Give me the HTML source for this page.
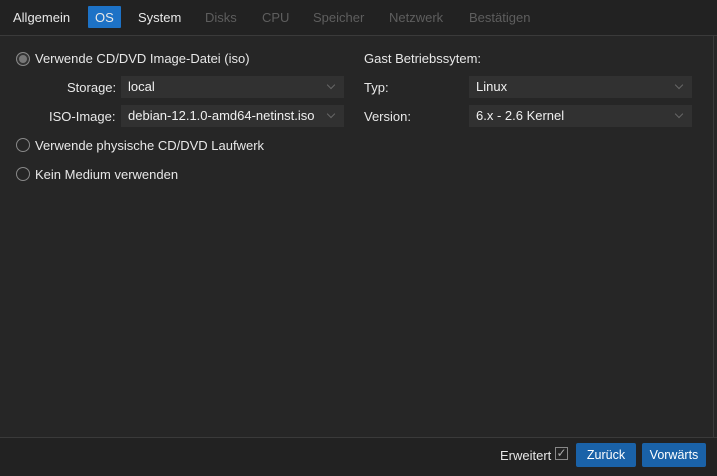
<!DOCTYPE html>
<html><head><meta charset="utf-8"><style>
body{margin:0;width:717px;height:475px;background:#262626;font-family:"Liberation Sans",sans-serif;font-size:13px;color:#e8e8e8;position:relative;overflow:hidden}
.a{position:absolute;white-space:nowrap}
.tabs{position:absolute;left:0;top:0;width:717px;height:35px;background:#222;border-bottom:1px solid #3a3a3a}
.t{position:absolute;top:10px;font-size:13px}
.dis{color:#5e5e5e}
.sel{position:absolute;height:22px;background:#313131;line-height:22px;padding-left:7px;box-sizing:border-box;color:#f0f0f0}
.sel:after{content:"";position:absolute;right:10px;top:6px;width:5px;height:5px;border-right:1px solid #666;border-bottom:1px solid #666;transform:rotate(45deg)}
.r{position:absolute;width:14px;height:14px;border:1px solid #888;border-radius:50%;box-sizing:border-box}
.btn{position:absolute;top:443px;height:24px;background:#1a62a8;color:#fff;line-height:24px;text-align:center;border-radius:2px;font-size:12.5px}
</style></head><body>
<div class="tabs"></div>
<div class="t" style="left:13px">Allgemein</div>
<div class="a" style="left:88px;top:6px;width:33px;height:22px;background:#1d72c6;border-radius:1px"></div>
<div class="t" style="left:95px">OS</div>
<div class="t" style="left:138px">System</div>
<div class="t dis" style="left:205px">Disks</div>
<div class="t dis" style="left:262px">CPU</div>
<div class="t dis" style="left:313px">Speicher</div>
<div class="t dis" style="left:389px">Netzwerk</div>
<div class="t dis" style="left:469px">Bestätigen</div>

<div class="r" style="left:16px;top:52px;background:#777;box-shadow:inset 0 0 0 2px #333"></div>
<div class="a" style="left:35px;top:51px">Verwende CD/DVD Image-Datei (iso)</div>
<div class="a" style="left:67px;top:80px">Storage:</div>
<div class="sel" style="left:121px;top:76px;width:223px">local</div>
<div class="a" style="left:49px;top:109px">ISO-Image:</div>
<div class="sel" style="left:121px;top:105px;width:223px">debian-12.1.0-amd64-netinst.iso</div>
<div class="r" style="left:16px;top:138px"></div>
<div class="a" style="left:35px;top:138px">Verwende physische CD/DVD Laufwerk</div>
<div class="r" style="left:16px;top:167px"></div>
<div class="a" style="left:35px;top:167px">Kein Medium verwenden</div>

<div class="a" style="left:364px;top:51px">Gast Betriebssytem:</div>
<div class="a" style="left:364px;top:80px">Typ:</div>
<div class="sel" style="left:469px;top:76px;width:223px">Linux</div>
<div class="a" style="left:364px;top:109px">Version:</div>
<div class="sel" style="left:469px;top:105px;width:223px">6.x - 2.6 Kernel</div>

<div class="a" style="left:713px;top:36px;width:1px;height:401px;background:#3a3a3a"></div>
<div class="a" style="left:0;top:437px;width:717px;height:38px;background:#222;border-top:1px solid #3a3a3a"></div>
<div class="a" style="left:500px;top:448px">Erweitert</div>
<div class="a" style="left:555px;top:447px;width:13px;height:13px;border:1px solid #888;box-sizing:border-box;color:#aaa;font-size:12px;line-height:11px;text-align:center">✓</div>
<div class="btn" style="left:576px;width:60px">Zurück</div>
<div class="btn" style="left:642px;width:64px">Vorwärts</div>
</body></html>
